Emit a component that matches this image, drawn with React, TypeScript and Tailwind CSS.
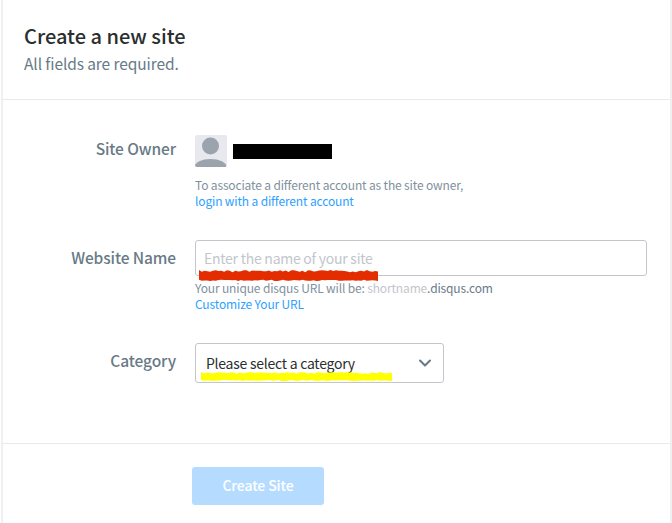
import { ChevronDown } from "lucide-react"

const font = "font-['Noto_Sans_CJK_JP','Source_Sans_Pro',sans-serif]"

function Scribble({ color, height }: { color: string; height: number }) {
  // hand-drawn marker stroke left over the screenshot, jagged on both edges
  const steps = 64
  const jitter = (i: number, seed: number) => Math.abs(Math.sin(i * seed) * 43758.5453) % 1
  const top = Array.from({ length: steps + 1 }, (_, i) => `${i * 3},${jitter(i, 12.9) * height * 0.2}`)
  const bottom = Array.from({ length: steps + 1 }, (_, i) => `${(steps - i) * 3},${height - jitter(i, 78.2) * height * 0.12}`)
  return (
    <svg width="100%" height={height} viewBox={`0 0 ${steps * 3} ${height}`} preserveAspectRatio="none" className="block">
      <polygon points={[...top, ...bottom].join(" ")} fill={color} />
    </svg>
  )
}

function Label({ children, className }: { children: string; className: string }) {
  return <div className={`w-[176px] shrink-0 text-right text-[15.5px] leading-[20px] font-medium tracking-[-0.1px] text-[#687a86] ${className}`}>{children}</div>
}

export default function App() {
  return (
    <div className={`${font} h-[523px] w-[672px] overflow-hidden bg-white pl-[1px]`}>
      <div className="flex h-full flex-col border-x-2 border-[#eef0f2]">
        <header className="h-[100px] shrink-0 border-b border-[#e7e9ee] pt-[22px] pl-[21px]">
          <h1 className="text-[20px] leading-[28px] font-medium text-[#2a2e2e]">Create a new site</h1>
          <p className="-mt-[1px] text-[15.5px] leading-[28px] tracking-[-0.1px] text-[#687a86]">All fields are required.</p>
        </header>

        <section className="h-[344px] shrink-0 border-b border-[#e7e9ee] pt-[35px]">
          <div className="flex">
            <Label className="-ml-[3px] pt-[3px]">Site Owner</Label>
            <div className="ml-[19px]">
              <div className="flex gap-[6px]">
                <div className="h-8 w-8 overflow-hidden rounded-[2px] bg-[#e7e9ee]">
                  <svg viewBox="0 0 32 32" className="h-8 w-8">
                    <circle cx="15.5" cy="11" r="8.5" fill="#9ba3ad" />
                    <ellipse cx="15.5" cy="32" rx="16" ry="8" fill="#9ba3ad" />
                  </svg>
                </div>
                <div className="mt-[9px] h-[15px] w-[99px] bg-black" />
              </div>
              <p className="mt-[10px] text-[12px] leading-4 tracking-[-0.15px] text-[#7f919e]">To associate a different account as the site owner,</p>
              <a className="block text-[12px] leading-4 tracking-[-0.15px] text-[#2e9fff]">login with a different account</a>
            </div>
          </div>

          <div className="mt-[31px] flex">
            <Label className="-ml-[3px] pt-[7px]">Website Name</Label>
            <div className="relative ml-[19px]">
              <div className="flex h-[36px] w-[452px] items-center rounded-[3px] border border-[#c2c6cc] pl-2 text-[14px] tracking-[-0.25px] text-[#c2c6cc]">
                Enter the name of your site
              </div>
              <p className="mt-[4px] text-[12px] leading-4 tracking-[-0.15px] text-[#7f919e]">
                Your unique disqus URL will be: <span className="text-[#c2c6cc]">shortname</span>
                <span className="text-[#687a86]">.disqus.com</span>
              </p>
              <a className="block text-[12px] leading-4 tracking-[-0.15px] text-[#2e9fff]">Customize Your URL</a>
              <div className="absolute top-[30px] left-[4px] w-[179px]">
                <Scribble color="#e32c00" height={11} />
              </div>
            </div>
          </div>

          <div className="mt-[31px] flex">
            <Label className="-ml-[3px] pt-[7px]">Category</Label>
            <div className="relative ml-[19px] flex h-[40px] w-[249px] items-center justify-between rounded-[3px] border border-[#c2c6cc] pr-[8px] pl-[10px] text-[14px] tracking-[-0.25px] text-[#2a2e2e]">
              Please select a category
              <ChevronDown className="h-5 w-5 text-[#687a86]" strokeWidth={2.5} />
              <div className="absolute top-[28px] left-[5px] w-[191px]">
                <Scribble color="#ffff00" height={9} />
              </div>
            </div>
          </div>
        </section>

        <footer className="pt-[23px] pl-[189px]">
          <button className="h-[38px] w-[132px] rounded-[3px] bg-[#b5dcff] pb-[2px] text-[14px] font-medium tracking-[-0.1px] text-white">Create Site</button>
        </footer>
      </div>
    </div>
  )
}
